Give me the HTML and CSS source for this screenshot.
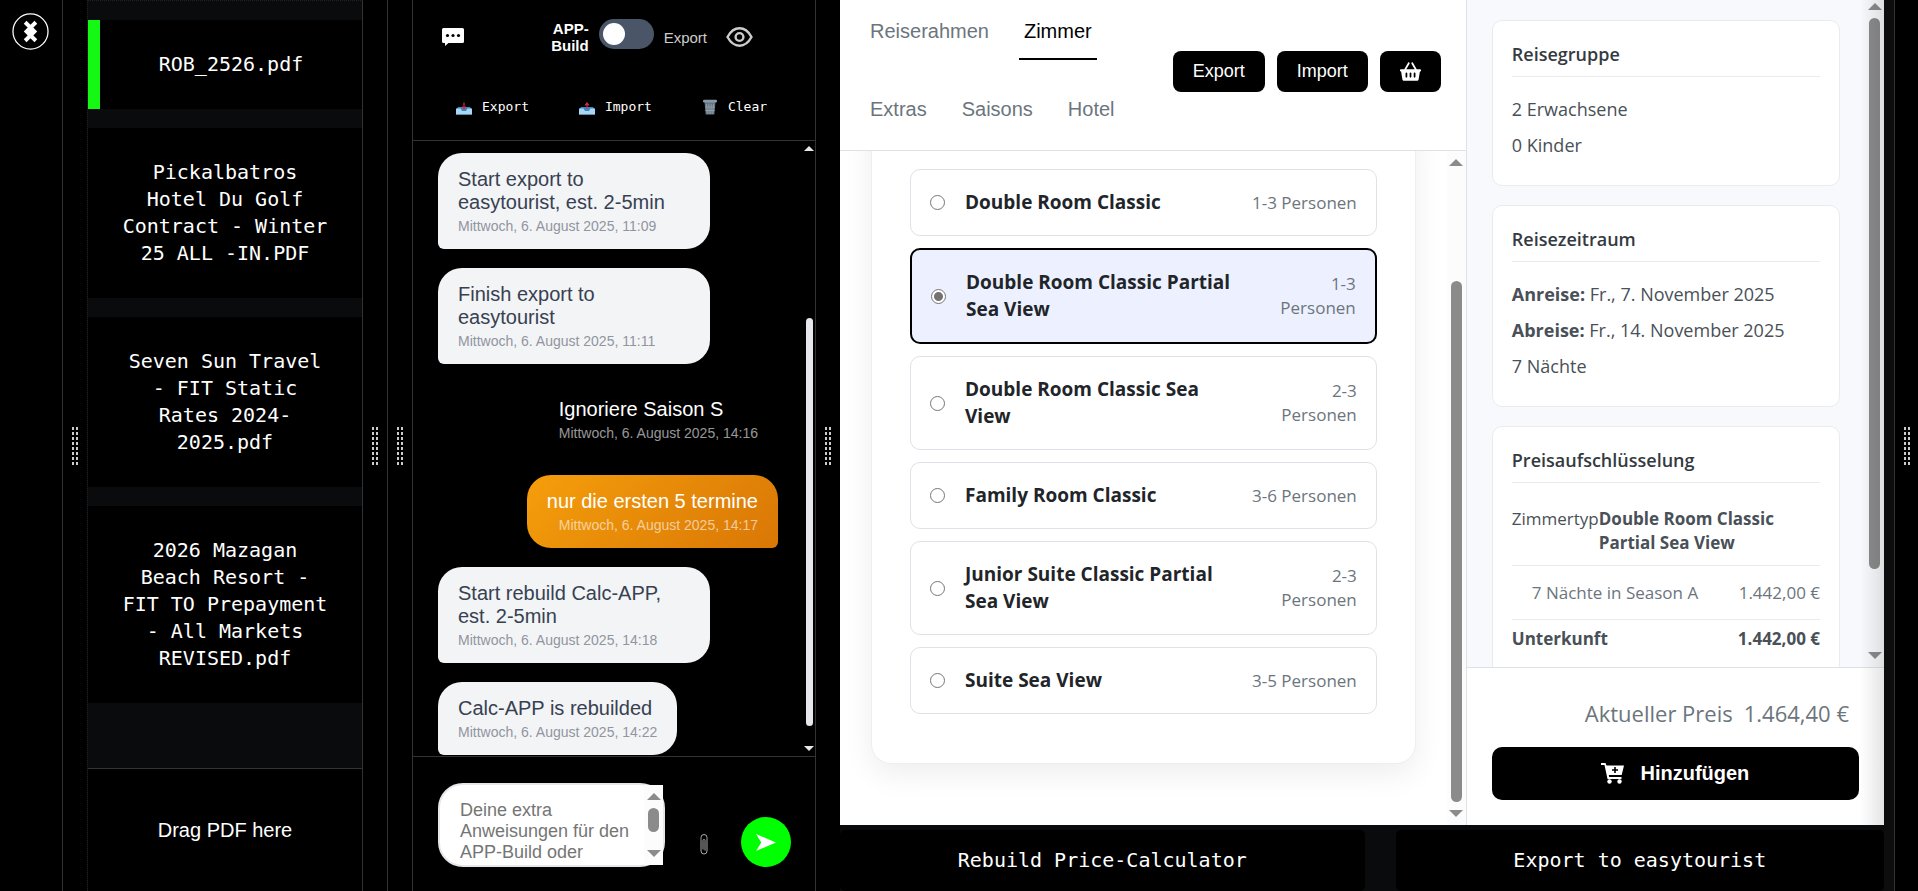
FILE: index.html
```html
<!DOCTYPE html>
<html lang="de">
<head>
  <meta charset="UTF-8" />
  <meta name="viewport" content="width=device-width, initial-scale=1.0"/>
  <title>Price Calculator</title>
  <link rel="stylesheet" href="styles.css">
</head>
<body>

<div class="workspace">

  <div class="rail">
    <svg class="logo" viewBox="0 0 38 38">
      <circle cx="19" cy="19" r="18" fill="none" stroke="#fff" stroke-width="1.3"/>
      <path d="M13.5 9.5l11 11M24.5 9.5l-11 11M13.5 17.5l11 11M24.5 17.5l-11 11" stroke="#fff" stroke-width="4"/>
      <path d="M14 19l5-5 5 5-5 5z" fill="#fff"/>
    </svg>
  </div>

  <div class="handle"><span class="grip"></span></div>

  <!-- PDF list -->
  <div class="files">
    <div class="file-list">
      <button class="file active">ROB_2526.pdf</button>
      <button class="file">Pickalbatros Hotel Du Golf Contract - Winter 25 ALL -IN.PDF</button>
      <button class="file">Seven Sun Travel - FIT Static Rates 2024-2025.pdf</button>
      <button class="file">2026 Mazagan Beach Resort - FIT TO Prepayment - All Markets REVISED.pdf</button>
    </div>
    <div class="drop-area">Drag PDF here</div>
  </div>

  <div class="handle lined"><span class="grip"></span></div>
  <div class="handle"><span class="grip"></span></div>

  <!-- Chat -->
  <div class="chat">
    <div class="chat-header">
      <div class="mode-row">
        <svg class="icon-comment" viewBox="0 0 22 18">
          <path d="M1.500 0h19a1.500 1.500 0 0 1 1.500 1.500v12a1.500 1.500 0 0 1-1.500 1.500H6.500L3 18v-3H1.500A1.500 1.500 0 0 1 0 13.500v-12A1.500 1.500 0 0 1 1.500 0z" fill="#fff"/>
          <circle cx="5.500" cy="7.500" r="1.600"/><circle cx="11" cy="7.500" r="1.600"/><circle cx="16.500" cy="7.500" r="1.600"/>
        </svg>
        <div class="mode-switch">
          <label class="mode-on" for="mode">APP-Build</label>
          <input type="checkbox" class="toggle" id="mode">
          <label class="mode-off" for="mode">Export</label>
          <svg class="icon-eye" viewBox="0 0 27 20" fill="none" stroke="#ccc" stroke-width="2.400">
            <path d="M1.500 10C4.500 4.500 8.500 1.300 13.500 1.300S22.500 4.500 25.500 10C22.500 15.500 18.500 18.700 13.500 18.700S4.500 15.500 1.500 10z"/>
            <circle cx="13.500" cy="10" r="3.900"/>
          </svg>
        </div>
      </div>
      <div class="actions">
        <button class="action">
          <svg viewBox="0 0 16 16"><path d="M2 8h12l2 3v4.500H0V11z" fill="#3b88c3"/><path d="M0 9.500h4.500l1.500 2.500h4l1.500-2.500H16v6H0z" fill="#a6d8f5"/><path d="M8 3.500v6M6 7.500l2 2.500 2-2.500" stroke="#dd2e44" stroke-width="1.200" fill="none"/></svg>
          Export
        </button>
        <button class="action">
          <svg viewBox="0 0 16 16"><path d="M2 8h12l2 3v4.500H0V11z" fill="#3b88c3"/><path d="M0 9.500h4.500l1.500 2.500h4l1.500-2.500H16v6H0z" fill="#a6d8f5"/><path d="M8 10V4.500M6 6.500l2-2.500 2 2.500" stroke="#dd2e44" stroke-width="1.200" fill="none"/></svg>
          Import
        </button>
        <button class="action">
          <svg viewBox="0 0 16 16"><path d="M2.500 3h11l-1.200 12.500H3.700z" fill="#66757f"/><path d="M4.500 5l.8 10M6.800 5l.4 10M9.200 5l-.4 10M11.500 5l-.8 10M3 8h10M3.300 11.500h9.400" stroke="#9aaab4" stroke-width=".7"/><rect x="1" y=".8" width="14" height="2.600" rx="1.200" fill="#8899a6"/></svg>
          Clear
        </button>
      </div>
    </div>

    <div class="chat-body">
      <div class="messages">
        <div class="bubble">Start export to easytourist, est. 2-5min<time>Mittwoch, 6. August 2025, 11:09</time></div>
        <div class="bubble">Finish export to easytourist<time>Mittwoch, 6. August 2025, 11:11</time></div>
        <div class="bubble mine plain">Ignoriere Saison S<time>Mittwoch, 6. August 2025, 14:16</time></div>
        <div class="bubble mine">nur die ersten 5 termine<time>Mittwoch, 6. August 2025, 14:17</time></div>
        <div class="bubble">Start rebuild Calc-APP, est. 2-5min<time>Mittwoch, 6. August 2025, 14:18</time></div>
        <div class="bubble">Calc-APP is rebuilded<time>Mittwoch, 6. August 2025, 14:22</time></div>
      </div>
      <div class="scrollbar slim"><i class="up"></i><div class="track"><div class="thumb"></div></div><i class="down"></i></div>
    </div>

    <div class="chat-input">
      <div class="prompt">
        <textarea aria-label="Anweisungen" placeholder="Deine extra Anweisungen für den APP-Build oder"></textarea>
        <div class="scrollbar prompt-bar"><i class="up"></i><div class="track"><div class="thumb"></div></div><i class="down"></i></div>
      </div>
      <button class="attach" aria-label="Datei">
        <svg viewBox="0 0 8 22" fill="none" stroke="#aaa"><path d="M1 6v11.500a3 3 0 0 0 6 0V4a3 3 0 0 0-6 0v2M3 16V7a1 1 0 0 1 2 0v10"/></svg>
      </button>
      <button class="send" aria-label="Senden">
        <svg viewBox="0 0 21 18"><path d="M0 0l21 9L0 18l5.500-9z" fill="#fff"/></svg>
      </button>
    </div>
  </div>

  <div class="handle"><span class="grip"></span></div>

  <!-- Calculator app -->
  <div class="app">
    <div class="calculator">
      <div class="main">
        <div class="app-header">
          <nav class="tabs">
            <a href="#" class="tab">Reiserahmen</a>
            <a href="#" class="tab active">Zimmer</a>
            <a href="#" class="tab">Extras</a>
            <a href="#" class="tab">Saisons</a>
            <a href="#" class="tab">Hotel</a>
          </nav>
          <div class="header-buttons">
            <button class="btn">Export</button>
            <button class="btn">Import</button>
            <button class="btn" aria-label="Warenkorb">
              <svg viewBox="0 0 576 512" fill="#fff"><path d="M253 9c12 7 16 21 9 33L173 192h230L314 42c-7-12-3-26 9-33s26-3 33 9l103 174h93c13 0 24 11 24 24v16c0 13-11 24-24 24h-6l-36 217c-4 23-24 39-47 39H113c-23 0-43-16-47-39L30 256h-6c-13 0-24-11-24-24v-16c0-13 11-24 24-24h93L220 18c7-12 21-16 33-9zM200 304c0-13-11-24-24-24s-24 11-24 24v96c0 13 11 24 24 24s24-11 24-24v-96zm88-24c-13 0-24 11-24 24v96c0 13 11 24 24 24s24-11 24-24v-96c0-13-11-24-24-24zm136 24c0-13-11-24-24-24s-24 11-24 24v96c0 13 11 24 24 24s24-11 24-24v-96z" fill-rule="evenodd"/></svg>
            </button>
          </div>
        </div>

        <div class="main-body">
          <div class="main-content">
            <div class="room-card">
              <label class="room"><input type="radio" name="room"><span class="room-name">Double Room Classic</span><span class="persons">1-3 Personen</span></label>
              <label class="room selected"><input type="radio" name="room" checked><span class="room-name">Double Room Classic Partial Sea View</span><span class="persons">1-3 Personen</span></label>
              <label class="room"><input type="radio" name="room"><span class="room-name">Double Room Classic Sea View</span><span class="persons">2-3 Personen</span></label>
              <label class="room"><input type="radio" name="room"><span class="room-name">Family Room Classic</span><span class="persons">3-6 Personen</span></label>
              <label class="room"><input type="radio" name="room"><span class="room-name">Junior Suite Classic Partial Sea View</span><span class="persons">2-3 Personen</span></label>
              <label class="room"><input type="radio" name="room"><span class="room-name">Suite Sea View</span><span class="persons">3-5 Personen</span></label>
            </div>
          </div>
          <div class="scrollbar main-bar"><i class="up"></i><div class="track"><div class="thumb"></div></div><i class="down"></i></div>
        </div>
      </div>

      <aside class="sidebar">
        <div class="sidebar-body">
          <div class="cards">
            <section class="card">
              <h3>Reisegruppe</h3>
              <p>2 Erwachsene</p>
              <p>0 Kinder</p>
            </section>
            <section class="card">
              <h3>Reisezeitraum</h3>
              <p><strong>Anreise:</strong> Fr., 7. November 2025</p>
              <p><strong>Abreise:</strong> Fr., 14. November 2025</p>
              <p>7 Nächte</p>
            </section>
            <section class="card prices">
              <h3>Preisaufschlüsselung</h3>
              <div class="price-row"><span>Zimmertyp</span><strong>Double Room Classic Partial Sea View</strong></div>
              <div class="price-row sub"><span>7 Nächte in Season A</span><span>1.442,00 €</span></div>
              <div class="price-row total"><span>Unterkunft</span><span>1.442,00 €</span></div>
            </section>
          </div>
          <div class="scrollbar side-bar"><i class="up"></i><div class="track"><div class="thumb"></div></div><i class="down"></i></div>
        </div>
        <div class="sidebar-footer">
          <div class="current-price"><span>Aktueller Preis</span><span>1.464,40 €</span></div>
          <button class="add">
            <svg viewBox="0 0 24 21"><path d="M0 0h4.500l1 2.500H23l-2.300 9.500H7.800l.4 2H20.500v2H6.500L3.500 2H0z" fill="#fff"/><circle cx="8.500" cy="18.500" r="2.200" fill="#fff"/><circle cx="18.500" cy="18.500" r="2.200" fill="#fff"/><path d="M14 4v6M11 7h6" stroke="#000" stroke-width="1.600"/></svg>
            Hinzufügen
          </button>
        </div>
      </aside>
    </div>

    <div class="bottom-bar">
      <button>Rebuild Price-Calculator</button>
      <button>Export to easytourist</button>
    </div>
  </div>

  <div class="handle last"><span class="grip"></span></div>

</div>

</body>
</html>
```
FILE: styles.css
```css
* {
  box-sizing: border-box;
}

body {
  margin: 0;
  background: #000;
  color: #fff;
  font-family: "Liberation Sans", Arial, sans-serif;
  font-size: 20px;
}

button {
  border: none;
  background: #000;
  color: #fff;
  font-family: inherit;
  cursor: pointer;
}

.workspace {
  display: flex;
  height: 100vh;
  overflow: hidden;
}

.rail {
  flex: 0 0 63px;
  border-right: 1px solid #333;
  padding: 13px 0 0 12px;
}

.logo {
  display: block;
  width: 37px;
  height: 37px;
}

/* resize handles */
.handle {
  flex: 0 0 24px;
  display: flex;
  align-items: center;
  justify-content: center;
  cursor: col-resize;
}

.handle.lined {
  flex-basis: 25px;
  border-right: 1px solid #333;
}

.handle.last {
  border-left: 1px solid #333;
}

.grip {
  width: 6px;
  height: 38px;
  background:
    linear-gradient(90deg, transparent 2px, #000 2px, #000 4px, transparent 4px),
    repeating-linear-gradient(#ccc 0, #ccc 3px, #000 3px, #000 5px);
}

/* scrollbars */
.scrollbar {
  display: flex;
  flex-direction: column;
  align-items: center;
  flex: 0 0 19px;
  padding: 8px 0;
}

.scrollbar i {
  border: 7px solid transparent;
}

.scrollbar .up {
  border-top: none;
  border-bottom-color: #8b8b8b;
}

.scrollbar .down {
  border-bottom: none;
  border-top-color: #8b8b8b;
}

.track {
  flex: 1;
  display: flex;
  flex-direction: column;
  margin: 8px 0;
}

.thumb {
  width: 11px;
  border-radius: 6px;
  background: #8b8b8b;
}

/* file list */
.files {
  flex: 274 1 0;
  min-width: 0;
  display: flex;
  flex-direction: column;
  border: 1px dotted #222;
  border-right: 1px solid #333;
  border-bottom: none;
  background: #0a0b0d;
}

.file-list {
  flex: 1;
  display: flex;
  flex-direction: column;
  gap: 19px;
  padding-top: 19px;
  overflow: hidden;
}

.file {
  padding: 31px;
  font-family: "DejaVu Sans Mono", monospace;
  font-size: 20px;
  line-height: 27px;
}

.file.active {
  border-left: 12px solid #14f814;
}

.drop-area {
  display: flex;
  align-items: center;
  justify-content: center;
  height: 123px;
  border-top: 1px solid #333;
  background: #000;
}

/* chat */
.chat {
  flex: 402 1 0;
  min-width: 0;
  display: flex;
  flex-direction: column;
  border-left: 1px solid #333;
  border-right: 1px solid #333;
}

.chat-header {
  padding: 19px 25px 15px;
  border-bottom: 1px solid #333;
}

.mode-row {
  display: flex;
  align-items: center;
  justify-content: space-between;
  padding: 0 37px 0 4px;
}

.icon-comment {
  width: 22px;
  height: 18px;
}

.mode-switch {
  display: flex;
  align-items: center;
  gap: 10px;
  font-size: 15px;
  line-height: 17px;
}

.mode-on {
  width: min-content;
  text-align: right;
  font-weight: bold;
}

.mode-off {
  color: #ccc;
}

.toggle {
  appearance: none;
  width: 55px;
  height: 30px;
  margin: 0 0 6px;
  padding: 4px;
  border-radius: 15px;
  background: #4a5568;
}

.toggle::before {
  content: "";
  display: block;
  width: 22px;
  height: 22px;
  border-radius: 50%;
  background: #fff;
}

.toggle:checked::before {
  margin-left: auto;
}

.icon-eye {
  width: 27px;
  height: 20px;
  margin-left: 9px;
}

.actions {
  display: flex;
  gap: 14px;
  margin-top: 34px;
}

.action {
  display: flex;
  align-items: center;
  gap: 10px;
  padding: 10px 18px;
  font-family: "DejaVu Sans Mono", monospace;
  font-size: 13px;
  line-height: 16px;
}

.action svg {
  width: 16px;
  height: 16px;
}

.chat-body {
  flex: 1;
  min-height: 0;
  display: flex;
  overflow: hidden;
}

.messages {
  flex: 1;
  display: flex;
  flex-direction: column;
  align-items: flex-start;
  gap: 19px;
  padding: 12px 25px 0;
}

.bubble {
  max-width: 80%;
  padding: 15px 20px;
  border-radius: 24px 24px 24px 6px;
  background: #f3f4f6;
  color: #374151;
  line-height: 23px;
}

.bubble time {
  display: block;
  margin-top: 4px;
  color: #9095a0;
  font-size: 14px;
  line-height: 16px;
}

.bubble.mine {
  align-self: flex-end;
  border-radius: 24px 24px 6px 24px;
  background: linear-gradient(135deg, #f59e0b, #d97706);
  color: #fff;
}

.bubble.mine time {
  color: rgba(255, 255, 255, 0.6);
  text-align: right;
}

.bubble.plain {
  background: none;
}

.scrollbar.slim {
  flex-basis: 12px;
  padding: 5px 0;
}

.slim i {
  border-width: 5px;
}

.slim .up {
  border-bottom-color: #e5e7eb;
}

.slim .down {
  border-top-color: #e5e7eb;
}

.slim .track {
  justify-content: flex-end;
  padding-bottom: 12px;
}

.slim .thumb {
  width: 7px;
  height: 72%;
  background: #e5e7eb;
}

.chat-input {
  display: flex;
  align-items: flex-end;
  padding: 26px 24px 24px 25px;
  border-top: 1px solid #333;
}

.prompt {
  position: relative;
  flex: 1;
  min-width: 0;
}

.prompt textarea {
  display: block;
  width: 100%;
  height: 84px;
  padding: 15px 20px;
  border: 2px solid #e5e7eb;
  border-radius: 25px;
  background: #fff;
  font-family: inherit;
  font-size: 18px;
  line-height: 21px;
  resize: none;
  overflow: hidden;
}

.prompt textarea::placeholder {
  color: #757575;
}

.prompt-bar {
  position: absolute;
  top: 2px;
  right: 2px;
  bottom: 2px;
  width: 19px;
  background: #fcfcfc;
}

.prompt-bar .thumb {
  height: 24px;
}

.attach {
  margin-left: 15px;
  padding: 11px 20px;
}

.attach svg {
  display: block;
  width: 8px;
  height: 23px;
}

.send {
  display: flex;
  align-items: center;
  justify-content: center;
  width: 50px;
  height: 50px;
  margin-left: 13px;
  border-radius: 50%;
  background: #0f0;
}

.send svg {
  width: 20px;
  height: 17px;
}

/* calculator */
.app {
  flex: 1044 1 0;
  min-width: 0;
  display: flex;
  flex-direction: column;
  padding-right: 10px;
  background: #0d0d0d;
}

.calculator {
  flex: 1;
  min-height: 0;
  display: flex;
  background: #fff;
  color: #212529;
  overflow: hidden;
}

.main {
  flex: 3 1 0;
  min-width: 0;
  display: flex;
  flex-direction: column;
  border-right: 1px solid #dee2e6;
}

.app-header {
  display: flex;
  align-items: center;
  gap: 12px;
  padding: 5px 25px 12px;
  border-bottom: 1px solid #dee2e6;
}

.tabs {
  flex: 1;
  display: flex;
  flex-wrap: wrap;
  gap: 23px 25px;
}

.tab {
  padding: 15px 5px;
  border-bottom: 2px solid transparent;
  color: #6c757d;
  line-height: 23px;
  text-decoration: none;
}

.tab.active {
  border-bottom-color: #000;
  color: #000;
}

.header-buttons {
  display: flex;
  gap: 12px;
}

.btn {
  padding: 10px 20px;
  border-radius: 8px;
  font-size: 18px;
  line-height: 21px;
}

.btn svg {
  display: block;
  width: 21px;
  height: 19px;
}

.main-body {
  flex: 1;
  min-height: 0;
  display: flex;
  overflow: hidden;
}

.main-content {
  flex: 1;
  min-width: 0;
  padding: 0 31px;
}

/* the list is scrolled down, so the card starts above the visible area */
.room-card {
  display: flex;
  flex-direction: column;
  gap: 12px;
  margin-top: -40px;
  padding: 57px 38px 49px;
  border: 1px solid #eceef0;
  border-radius: 20px;
  background: #fff;
  box-shadow: 0 10px 30px rgba(0, 0, 0, 0.07);
}

.room {
  display: flex;
  align-items: center;
  gap: 20px;
  padding: 19px;
  border: 1px solid #dee2e6;
  border-radius: 10px;
  font-family: "Open Sans", "Segoe UI", sans-serif;
}

.room.selected {
  border: 2px solid #000;
  background: #edf1ff;
}

.room input {
  appearance: none;
  flex: none;
  width: 15px;
  height: 15px;
  margin: 0;
  border: 1px solid #767676;
  border-radius: 50%;
  background: #fff;
}

.room input:checked {
  background: radial-gradient(#767070 4px, #fff 5px);
}

.room-name {
  font-size: 19px;
  font-weight: bold;
  line-height: 27px;
}

.persons {
  margin-left: auto;
  color: #6c757d;
  font-size: 17px;
  line-height: 24px;
  text-align: right;
}

.main-bar {
  background: #fcfcfc;
}

.main-bar .track {
  justify-content: flex-end;
}

.main-bar .thumb {
  height: 83%;
}

/* sidebar */
.sidebar {
  position: relative;
  flex: 2 1 0;
  min-width: 0;
  display: flex;
  flex-direction: column;
  font-family: "Open Sans", "Segoe UI", sans-serif;
}

.sidebar::after {
  content: "";
  position: absolute;
  top: 0;
  right: 0;
  bottom: 0;
  width: 24px;
  background: linear-gradient(90deg, transparent, rgba(0, 0, 0, 0.1));
  pointer-events: none;
}

.sidebar-body {
  flex: 1;
  min-height: 0;
  display: flex;
  background: #f8f9fc;
  overflow: hidden;
}

.cards {
  flex: 1;
  min-width: 0;
  display: flex;
  flex-direction: column;
  gap: 19px;
  padding: 20px 25px 0;
}

.card {
  flex: none;
  padding: 20px 19px 17px;
  border: 1px solid #e9ecef;
  border-radius: 10px;
  background: #fff;
  color: #495057;
  font-size: 17px;
  line-height: 26px;
}

.card h3 {
  margin: 0 0 19px;
  padding-bottom: 9px;
  border-bottom: 1px solid #e9ecef;
  color: #343a40;
  font-size: 18px;
  font-weight: 600;
  line-height: 26px;
}

.card p {
  margin: 0 0 10px;
  font-size: 18px;
}

.card.prices h3 {
  margin-bottom: 14px;
}

.price-row {
  display: flex;
  justify-content: space-between;
  padding: 10px 0;
  border-bottom: 1px solid #e9ecef;
  line-height: 24px;
}

.price-row.sub {
  padding: 15px 0 14px 20px;
  color: #6c757d;
}

.price-row.total {
  padding: 7px 0;
  border-bottom: none;
  font-weight: bold;
}

.side-bar {
  padding: 3px 0 8px;
}

.side-bar .thumb {
  height: 88%;
}

.sidebar-footer {
  padding: 30px 25px 25px;
  border-top: 1px solid #dee2e6;
}

.current-price {
  display: flex;
  justify-content: flex-end;
  gap: 11px;
  margin-bottom: 19px;
  padding-right: 10px;
  color: #6c757d;
  font-size: 22px;
  line-height: 30px;
}

.add {
  display: flex;
  align-items: center;
  justify-content: center;
  gap: 15px;
  width: 100%;
  padding: 15px;
  border-radius: 10px;
  font-family: "Liberation Sans", Arial, sans-serif;
  font-size: 20px;
  font-weight: bold;
  line-height: 23px;
}

.add svg {
  width: 24px;
  height: 21px;
}

.bottom-bar {
  display: flex;
  gap: 31px;
  padding-top: 5px;
  background: #0a0b0d;
}

.bottom-bar button {
  flex: 1 1 auto;
  padding: 17px 20px;
  border-radius: 5px;
  font-family: "DejaVu Sans Mono", monospace;
  font-size: 20px;
  line-height: 27px;
}
```
